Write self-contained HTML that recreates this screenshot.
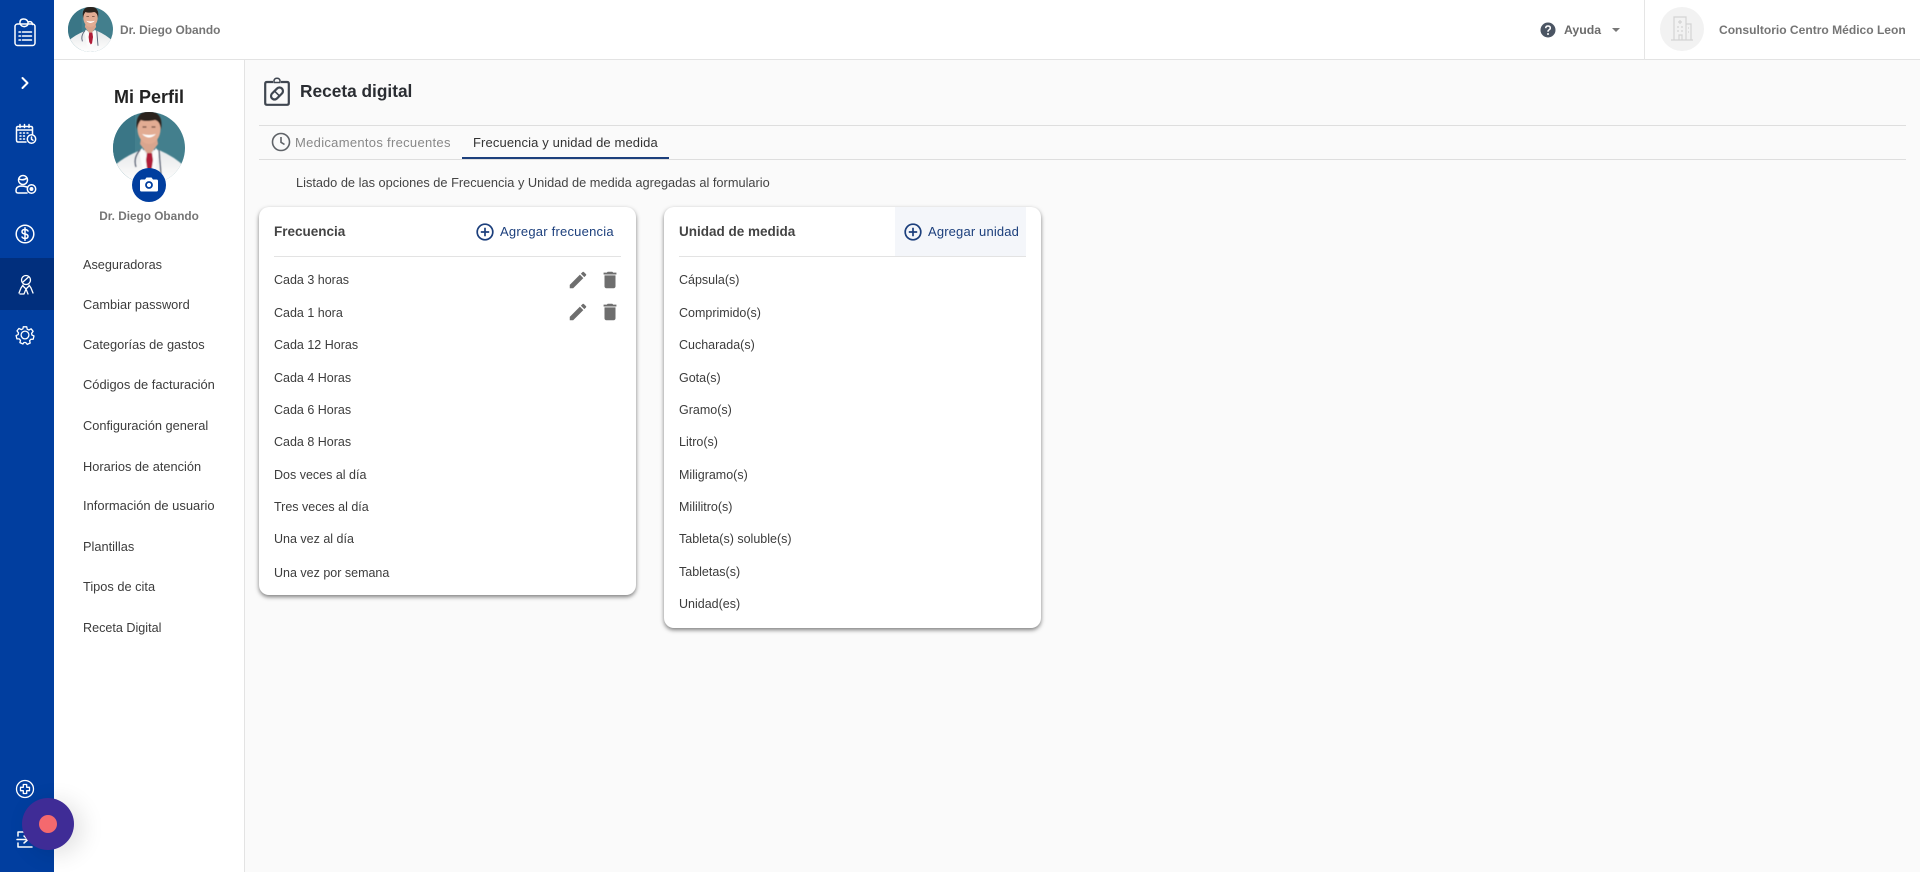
<!DOCTYPE html>
<html lang="es">
<head>
<meta charset="utf-8">
<title>Receta digital</title>
<style>
*{box-sizing:border-box}
html,body{margin:0;padding:0;width:1920px;height:872px;overflow:hidden;background:#fafafa;font-family:"Liberation Sans",sans-serif;color:#3c3c3c}
.a{position:absolute;white-space:nowrap}
.t{position:absolute;white-space:nowrap;font-size:12.800px;line-height:16px}
.l{font-size:12.500px}
svg{position:absolute;overflow:visible}
.ic{fill:none;stroke:#fff;stroke-width:1.5;stroke-linecap:round;stroke-linejoin:round}
.card{position:absolute;background:#fff;border-radius:10px;box-shadow:0 2px 4px rgba(0,0,0,.5)}
</style>
</head>
<body>
<svg width="0" height="0" style="position:absolute">
<defs>
<clipPath id="cl"><circle cx="36" cy="36" r="36"/></clipPath>
<filter id="soft" x="-5%" y="-5%" width="110%" height="110%"><feGaussianBlur stdDeviation=".5"/></filter>
<linearGradient id="coat" x1="0" y1="0" x2="0" y2="1"><stop offset="0" stop-color="#e6e8ea"/><stop offset=".6" stop-color="#f6f6f6"/><stop offset="1" stop-color="#fff"/></linearGradient>
<symbol id="doc" viewBox="0 0 72 72">
<g clip-path="url(#cl)">
<rect width="72" height="72" fill="#437f8d"/>
<rect x="0" y="0" width="22" height="72" fill="#3a7686"/>
<g filter="url(#soft)">
<path d="M0 72 L0 55 Q10 45 28 38 L46 38 Q62 45 72 55 L72 72Z" fill="url(#coat)"/>
<path d="M27 32 L36 44 L45 32 L44 26 H28Z" fill="#d9a58e"/>
<path d="M29 36 L36 47 L43 36 L46 40 L39 72 H33 L26 40Z" fill="#fbfbfb"/>
<path d="M34 41 H39 L40 48 L38.500 58 L36.500 60 L34 56 L33 48Z" fill="#b01c38"/>
<path d="M27 38 Q20 46 23 55 M46 38 L48 62" fill="none" stroke="#5a6478" stroke-width="1.500"/>
<ellipse cx="36" cy="17" rx="11.500" ry="15" fill="#e2ac93"/>
<path d="M24 18 Q21 0 36 -1 Q51 0 48 18 Q47 9 42 8 Q32 10 28 8 Q25 11 24 18Z" fill="#2a211e"/>
<path d="M29 22 Q36 29 43 22 Q36 24 29 22Z" fill="#fff"/>
<path d="M29.500 15h4M38.500 15h4" stroke="#6a4a3c" stroke-width="1.200"/>
</g>
</g>
</symbol>
</defs>
</svg>

<!-- Left rail -->
<div class="a" style="left:0;top:0;width:54px;height:872px;background:#013e9f"></div>
<div class="a" style="left:0;top:258px;width:54px;height:52px;background:#012f7d"></div>

<svg class="ic" style="left:14px;top:18px" width="24" height="29" viewBox="0 0 24 29">
<rect x="1" y="6" width="20" height="21.500" rx="2.500"/>
<path d="M6 5.500 Q5.500 1 9.500 1 Q13 1 14 4 M14 4 Q18 2.500 18.500 6.500 M6 5.500 Q7.500 9 11 8.500 Q14.500 8 14 4"/>
<path d="M5 14h1.500M8.500 14h9M5 18h1.500M8.500 18h9M5 22h1.500M8.500 22h9"/>
</svg>
<svg class="ic" style="left:20px;top:76px;stroke-width:2" width="10" height="14" viewBox="0 0 10 14"><path d="M2.500 2 L7.500 7 L2.500 12"/></svg>
<svg class="ic" style="left:15px;top:124px" width="22" height="20" viewBox="0 0 22 20">
<path d="M11 18H3Q1.500 18 1.500 16V4Q1.500 2.500 3 2.500H16Q17.500 2.500 17.500 4V10"/>
<path d="M5 .5v3M9.500 .5v3M14 .5v3M2 6h15"/>
<path d="M5 9h1M8.500 9h1M12 9h1M5 12h1M8.500 12h1M5 15h1M8.500 15h1"/>
<circle cx="16.500" cy="15" r="4.200"/><path d="M16.500 13v2.200l1.500 1"/>
</svg>
<svg class="ic" style="left:15px;top:174px" width="22" height="21" viewBox="0 0 22 21">
<circle cx="8" cy="6" r="4.500"/><path d="M4 5 Q8 7 12 4"/>
<path d="M12 13 Q9 12 6 12 Q1 12.500 1 16.500 Q1 19 3 19H12"/>
<circle cx="16.500" cy="15" r="4.200"/><circle cx="16.500" cy="15" r="1.200" fill="#fff"/>
</svg>
<svg class="ic" style="left:15px;top:224px" width="20" height="20" viewBox="0 0 20 20">
<circle cx="10" cy="10" r="8.800"/>
<path d="M13 7 Q12 5.500 10 5.500 Q7 5.500 7 7.700 Q7 9.500 10 10 Q13 10.500 13 12.300 Q13 14.500 10 14.500 Q8 14.500 7 13M10 3.700v12.600"/>
</svg>
<svg class="ic" style="left:18px;top:274px;stroke-width:1.300" width="16" height="22" viewBox="0 0 16 22">
<circle cx="8" cy="6" r="4.500"/><path d="M5 8 L10.500 3"/>
<path d="M5 11 L3 14 L1 19 M11 11 L13 14 L15 19 M5 12 L8 15 L11 12 M8 15 L6 20 H2 M8 15 L10 20"/>
</svg>
<svg class="ic" style="left:16px;top:326px;stroke-width:1.300" width="18" height="18" viewBox="0 0 18 18">
<path d="M7.300 .8h3.400l.5 2.400 1.700.8 2.200-1.200 2 2.500-1.500 2 .3 1.700 2.100 1-.8 3.200-2.400.1-1.200 1.400.6 2.300-3 1.400-1.500-1.900h-1.800L6.900 18l-3-1.400.6-2.300-1.200-1.400-2.400-.1-.8-3.200 2.100-1 .3-1.700-1.500-2 2-2.500 2.200 1.200 1.700-.8z"/>
<circle cx="9" cy="9" r="3.900"/>
</svg>
<svg class="ic" style="left:16px;top:780px;stroke-width:1.300" width="18" height="18" viewBox="0 0 18 18">
<circle cx="9" cy="9" r="8.500"/>
<path d="M7.300 4.500h3.400v2.800h2.800v3.400h-2.800v2.800H7.300v-2.800H4.500V7.300h2.800z"/>
</svg>
<svg class="ic" style="left:16px;top:831px" width="18" height="17" viewBox="0 0 18 17">
<path d="M8 1H2V5M2 12V16H16M1 8.500H11M8 5L12 8.500L8 12"/>
</svg>

<!-- Header -->
<div class="a" style="left:54px;top:0;width:1866px;height:60px;background:#fff;border-bottom:1px solid #e3e3e3"></div>
<svg style="left:68px;top:7px" width="45" height="45"><use href="#doc" width="45" height="45"/></svg>
<div class="t" style="left:120px;top:22px;color:#757575;font-weight:bold;font-size:11.900px">Dr. Diego Obando</div>

<svg style="left:1540px;top:22px" width="16" height="16" viewBox="0 0 16 16">
<circle cx="8" cy="8" r="7.500" fill="#4b5563"/>
<path d="M5.700 6.200Q5.800 4 8 4Q10.300 4 10.300 6Q10.300 7.200 9 7.900Q8 8.500 8 9.800" fill="none" stroke="#fff" stroke-width="1.500"/>
<circle cx="8" cy="12" r="1" fill="#fff"/>
</svg>
<div class="t" style="left:1564px;top:22px;color:#6b6b6b;font-weight:bold;font-size:12.300px">Ayuda</div>
<svg style="left:1612px;top:28px" width="8" height="4"><path d="M0 0H8L4 4Z" fill="#777"/></svg>
<div class="a" style="left:1644px;top:0;width:1px;height:60px;background:#e5e5e5"></div>
<div class="a" style="left:1660px;top:7px;width:44px;height:44px;border-radius:50%;background:#f2f2f2"></div>
<svg style="left:1670px;top:15px" width="24" height="26" viewBox="0 0 24 26" fill="none" stroke="#d4d4d4" stroke-width="1.200">
<path d="M4 25V2H16V25M16 9H21V25M1 25H23M9 25V20H12V25"/>
<path d="M10 5v4M8 7h4M7 12h2M11 12h2M7 16h2M11 16h2M18 13h1M18 17h1"/>
</svg>
<div class="t" style="left:1719px;top:22px;color:#757575;font-weight:bold;font-size:12.050px">Consultorio Centro Médico Leon</div>

<!-- Profile panel -->
<div class="a" style="left:54px;top:60px;width:191px;height:812px;background:#fff;border-right:1px solid #e3e3e3"></div>
<div class="a" style="left:54px;top:86px;width:190px;text-align:center;font-size:18px;line-height:22px;font-weight:bold;color:#222">Mi Perfil</div>
<svg style="left:113px;top:112px" width="72" height="72"><use href="#doc" width="72" height="72"/></svg>
<div class="a" style="left:132px;top:168px;width:34px;height:34px;border-radius:50%;background:#013e9f"></div>
<svg style="left:140px;top:177px" width="18" height="15" viewBox="0 0 18 15">
<path d="M1.500 2.500H5L6.500 .5H11.500L13 2.500H16.500Q18 2.500 18 4V13Q18 14.500 16.500 14.500H1.500Q0 14.500 0 13V4Q0 2.500 1.500 2.500Z" fill="#fff"/>
<circle cx="9" cy="8" r="3" fill="none" stroke="#013e9f" stroke-width="1.800"/>
</svg>
<div class="a" style="left:54px;top:208px;width:190px;text-align:center;font-size:11.800px;line-height:16px;font-weight:bold;color:#757575">Dr. Diego Obando</div>

<div class="t" style="left:83px;top:257px;font-size:12.700px">Aseguradoras</div>
<div class="t" style="left:83px;top:297px">Cambiar password</div>
<div class="t" style="left:83px;top:337px">Categorías de gastos</div>
<div class="t" style="left:83px;top:377px;font-size:12.900px">Códigos de facturación</div>
<div class="t" style="left:83px;top:418px">Configuración general</div>
<div class="t" style="left:83px;top:459px">Horarios de atención</div>
<div class="t" style="left:83px;top:498px;font-size:12.950px">Información de usuario</div>
<div class="t" style="left:83px;top:539px">Plantillas</div>
<div class="t" style="left:83px;top:579px">Tipos de cita</div>
<div class="t" style="left:83px;top:620px;font-size:12.600px">Receta Digital</div>

<!-- Title -->
<svg style="left:264px;top:77px" width="26" height="29" viewBox="0 0 26 29" fill="none" stroke="#3f4650" stroke-width="2.200" stroke-linejoin="round">
<path d="M9 5H3Q1.200 5 1.200 6.800V26Q1.200 27.800 3 27.800H23Q24.800 27.800 24.800 26V6.800Q24.800 5 23 5H17"/>
<path d="M10 5.500V3.500Q10.500 1.200 13 1.200Q15.500 1.200 16 3.500V5.500Z" stroke-width="1.500"/>
<g transform="rotate(-45 13 16.500)"><rect x="6" y="13" width="14" height="7" rx="3.500"/><path d="M13 13V20" stroke-width="1.600"/></g>
</svg>
<div class="a" style="left:300px;top:80px;font-size:17.300px;line-height:22px;font-weight:bold;color:#2a2d32">Receta digital</div>

<!-- Tabs -->
<div class="a" style="left:259px;top:125px;width:1647px;height:1px;background:#dedede"></div>
<div class="a" style="left:259px;top:159px;width:1647px;height:1px;background:#dedede"></div>
<svg style="left:271px;top:132px" width="20" height="20" viewBox="0 0 20 20" fill="none" stroke="#5f6368" stroke-width="1.600">
<circle cx="10" cy="10" r="8.500"/><path d="M10 5V10.300L13.500 12.500"/>
</svg>
<div class="t" style="left:295px;top:135px;color:#888;font-size:13px;letter-spacing:.3px">Medicamentos frecuentes</div>
<div class="t" style="left:473px;top:135px;color:#333;font-size:13px;letter-spacing:.12px">Frecuencia y unidad de medida</div>
<div class="a" style="left:462px;top:157px;width:207px;height:2px;background:#1c3f7c"></div>
<div class="t" style="left:296px;top:175px;color:#444">Listado de las opciones de Frecuencia y Unidad de medida agregadas al formulario</div>

<!-- Card 1 -->
<div class="card" style="left:259px;top:207px;width:377px;height:388px"></div>
<div class="t" style="left:274px;top:224px;font-size:13.500px;color:#444;font-weight:bold">Frecuencia</div>
<svg style="left:476px;top:223px" width="18" height="18" viewBox="0 0 18 18" fill="none" stroke="#1c3f7c" stroke-width="1.700">
<circle cx="9" cy="9" r="7.800"/><path d="M9 4.800V13.200M4.800 9H13.200"/>
</svg>
<div class="t" style="left:500px;top:224px;color:#1c3f7c;font-size:13px;letter-spacing:.22px">Agregar frecuencia</div>
<div class="a" style="left:274px;top:256px;width:347px;height:1px;background:#e3e3e3"></div>

<div class="t l" style="left:274px;top:272px">Cada 3 horas</div>
<div class="t l" style="left:274px;top:305px">Cada 1 hora</div>
<div class="t l" style="left:274px;top:337px">Cada 12 Horas</div>
<div class="t l" style="left:274px;top:370px">Cada 4 Horas</div>
<div class="t l" style="left:274px;top:402px">Cada 6 Horas</div>
<div class="t l" style="left:274px;top:434px">Cada 8 Horas</div>
<div class="t l" style="left:274px;top:467px">Dos veces al día</div>
<div class="t l" style="left:274px;top:499px">Tres veces al día</div>
<div class="t l" style="left:274px;top:531px">Una vez al día</div>
<div class="t l" style="left:274px;top:565px">Una vez por semana</div>

<svg style="left:567px;top:269px" width="22" height="22" viewBox="0 0 24 24"><path d="M3 17.250V21h3.750L17.810 9.940l-3.750-3.750L3 17.250zM20.710 7.040a1 1 0 0 0 0-1.410l-2.340-2.340a1 1 0 0 0-1.410 0l-1.830 1.830 3.750 3.750 1.830-1.830z" fill="#6e6e6e"/></svg>
<svg style="left:599px;top:269px" width="22" height="22" viewBox="0 0 24 24"><path d="M6 19c0 1.100.9 2 2 2h8c1.100 0 2-.9 2-2V7H6v12zM19 4h-3.500l-1-1h-5l-1 1H5v2h14V4z" fill="#6e6e6e"/></svg>
<svg style="left:567px;top:301px" width="22" height="22" viewBox="0 0 24 24"><path d="M3 17.250V21h3.750L17.810 9.940l-3.750-3.750L3 17.250zM20.710 7.040a1 1 0 0 0 0-1.410l-2.340-2.340a1 1 0 0 0-1.410 0l-1.830 1.830 3.750 3.750 1.830-1.830z" fill="#6e6e6e"/></svg>
<svg style="left:599px;top:301px" width="22" height="22" viewBox="0 0 24 24"><path d="M6 19c0 1.100.9 2 2 2h8c1.100 0 2-.9 2-2V7H6v12zM19 4h-3.500l-1-1h-5l-1 1H5v2h14V4z" fill="#6e6e6e"/></svg>

<!-- Card 2 -->
<div class="card" style="left:664px;top:207px;width:377px;height:421px"></div>
<div class="a" style="left:895px;top:207px;width:131px;height:49px;background:#f4f6fa"></div>
<div class="t" style="left:679px;top:224px;font-size:13.500px;color:#444;font-weight:bold">Unidad de medida</div>
<svg style="left:904px;top:223px" width="18" height="18" viewBox="0 0 18 18" fill="none" stroke="#1c3f7c" stroke-width="1.700">
<circle cx="9" cy="9" r="7.800"/><path d="M9 4.800V13.200M4.800 9H13.200"/>
</svg>
<div class="t" style="left:928px;top:224px;color:#1c3f7c;font-size:13px;letter-spacing:.15px">Agregar unidad</div>
<div class="a" style="left:679px;top:256px;width:347px;height:1px;background:#e3e3e3"></div>

<div class="t l" style="left:679px;top:272px">Cápsula(s)</div>
<div class="t l" style="left:679px;top:305px">Comprimido(s)</div>
<div class="t l" style="left:679px;top:337px">Cucharada(s)</div>
<div class="t l" style="left:679px;top:370px">Gota(s)</div>
<div class="t l" style="left:679px;top:402px">Gramo(s)</div>
<div class="t l" style="left:679px;top:434px">Litro(s)</div>
<div class="t l" style="left:679px;top:467px">Miligramo(s)</div>
<div class="t l" style="left:679px;top:499px">Mililitro(s)</div>
<div class="t l" style="left:679px;top:531px">Tableta(s) soluble(s)</div>
<div class="t l" style="left:679px;top:564px">Tabletas(s)</div>
<div class="t l" style="left:679px;top:596px">Unidad(es)</div>

<!-- Floating button -->
<div class="a" style="left:22px;top:798px;width:52px;height:52px;border-radius:50%;background:#3f2c96;box-shadow:8px 4px 24px rgba(0,0,0,.12)"></div>
<div class="a" style="left:39px;top:815px;width:18px;height:18px;border-radius:50%;background:#f4696e"></div>
</body>
</html>
